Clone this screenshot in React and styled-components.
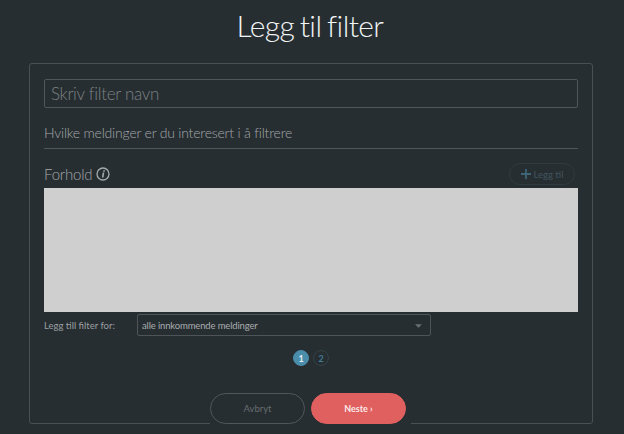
import React from "react";
import styled, { createGlobalStyle } from "styled-components";
import { FaCaretDown } from "react-icons/fa";

const Global = createGlobalStyle`
  html, body {
    margin: 0;
    padding: 0;
    background: #272e31;
    font-family: Lato, "Open Sans", sans-serif;
  }
  * { box-sizing: border-box; }
`;

const Page = styled.div`
  width: 624px;
  height: 434px;
  overflow: hidden;
  background: #272e31;
  padding-top: 3px;
`;

const Title = styled.h1`
  margin: 0 0 16px;
  height: 44px;
  line-height: 44px;
  padding-right: 4px;
  text-align: center;
  color: #f2f4f5;
  font-size: 30px;
  font-weight: 300;
  letter-spacing: -0.6px;
  word-spacing: -2px;
`;

const Panel = styled.div`
  position: relative;
  width: 564px;
  height: 361px;
  margin-left: 29px;
  padding: 15px 14px 0;
  border: 1px solid #4a5053;
  border-radius: 3px;
`;

const NameInput = styled.input`
  display: block;
  width: 534px;
  height: 29px;
  padding: 0 6px;
  background: transparent;
  border: 1px solid #50565a;
  border-radius: 2px;
  font-family: inherit;
  font-size: 17px;
  font-weight: 300;
  letter-spacing: -0.3px;
  outline: none;
  &::placeholder {
    color: #7b8084;
    opacity: 1;
  }
`;

const Question = styled.div`
  width: 534px;
  height: 41px;
  padding-top: 15px;
  line-height: 20px;
  border-bottom: 1px solid #50565a;
  color: #a3a8ab;
  font-size: 14px;
  font-weight: 300;
  letter-spacing: -0.2px;
`;

const ConditionHead = styled.div`
  display: flex;
  justify-content: space-between;
  align-items: center;
  width: 534px;
  height: 39px;
  padding: 11px 3px 0 0;
`;

const ConditionLabel = styled.div`
  display: flex;
  align-items: center;
  gap: 4px;
  color: #a3a8ab;
  font-size: 15px;
  font-weight: 300;
  letter-spacing: -0.2px;
`;

const AddButton = styled.div`
  display: flex;
  align-items: center;
  justify-content: center;
  gap: 3px;
  width: 66px;
  height: 22px;
  border: 1px solid #2f3a3f;
  border-radius: 11px;
  color: #40545f;
  font-size: 9.5px;
`;

const Placeholder = styled.div`
  width: 534px;
  height: 124px;
  background: #cfcfcf;
`;

const SelectRow = styled.div`
  display: flex;
  align-items: center;
  height: 22px;
  margin-top: 2px;
`;

const SelectLabel = styled.div`
  width: 93px;
  color: #9a9fa2;
  font-size: 9.5px;
`;

const Select = styled.div`
  display: flex;
  justify-content: space-between;
  align-items: center;
  width: 294px;
  height: 22px;
  padding: 0 6px 0 4px;
  border: 1px solid #4e5457;
  border-radius: 2px;
  color: #a8acaf;
  font-size: 9.5px;
  letter-spacing: -0.15px;
`;

const Caret = styled.span`
  display: flex;
  color: #686e71;
`;

const Pager = styled.div`
  display: flex;
  justify-content: center;
  gap: 4px;
  margin-top: 14px;
`;

const PageDot = styled.div`
  display: flex;
  align-items: center;
  justify-content: center;
  width: 16px;
  height: 16px;
  border-radius: 50%;
  font-size: 9px;
  font-weight: 700;
  background: ${(p) => (p.$active ? "#4a8dab" : "transparent")};
  color: ${(p) => (p.$active ? "#e6eef2" : "#3f7a96")};
  border: 1px solid ${(p) => (p.$active ? "#4a8dab" : "#324249")};
`;

const Actions = styled.div`
  position: absolute;
  left: 180px;
  bottom: -1px;
  display: flex;
  gap: 6px;
  padding-right: 5px;
  background: #272e31;
`;

const PillButton = styled.div`
  display: flex;
  align-items: center;
  justify-content: center;
  width: 95px;
  height: 31px;
  border-radius: 16px;
  font-size: ${(p) => (p.$primary ? "9px" : "9.5px")};
  font-weight: ${(p) => (p.$primary ? 700 : 400)};
  border: 1px solid ${(p) => (p.$primary ? "#e06060" : "#50565a")};
  background: ${(p) => (p.$primary ? "#e06060" : "transparent")};
  color: ${(p) => (p.$primary ? "#fbe9e9" : "#666c6f")};
`;

const App = () => {
  return (
    <Page>
      <Global />
      <Title>Legg til filter</Title>
      <Panel>
        <NameInput placeholder="Skriv filter navn" />
        <Question>Hvilke meldinger er du interesert i å filtrere</Question>
        <ConditionHead>
          <ConditionLabel>
            Forhold
            <svg width="14" height="14" viewBox="0 0 14 14">
              <circle cx="7" cy="7" r="6" fill="none" stroke="#a6abad" strokeWidth="1.3" />
              <path d="M7.4 3.2h1.6l-.3 1.5H7.1zM6.7 5.6h1.6L7.5 10.6H5.9z" fill="#a6abad" />
            </svg>
          </ConditionLabel>
          <AddButton>
            <svg width="10" height="10" viewBox="0 0 10 10">
              <path d="M5 0v10M0 5h10" stroke="#3f6476" strokeWidth="1.8" />
            </svg>
            Legg til
          </AddButton>
        </ConditionHead>
        <Placeholder />
        <SelectRow>
          <SelectLabel>Legg till filter for:</SelectLabel>
          <Select>
            alle innkommende meldinger
            <Caret>
              <FaCaretDown size={11} />
            </Caret>
          </Select>
        </SelectRow>
        <Pager>
          <PageDot $active>1</PageDot>
          <PageDot>2</PageDot>
        </Pager>
        <Actions>
          <PillButton>Avbryt</PillButton>
          <PillButton $primary>Neste ›</PillButton>
        </Actions>
      </Panel>
    </Page>
  );
};

export default App;
